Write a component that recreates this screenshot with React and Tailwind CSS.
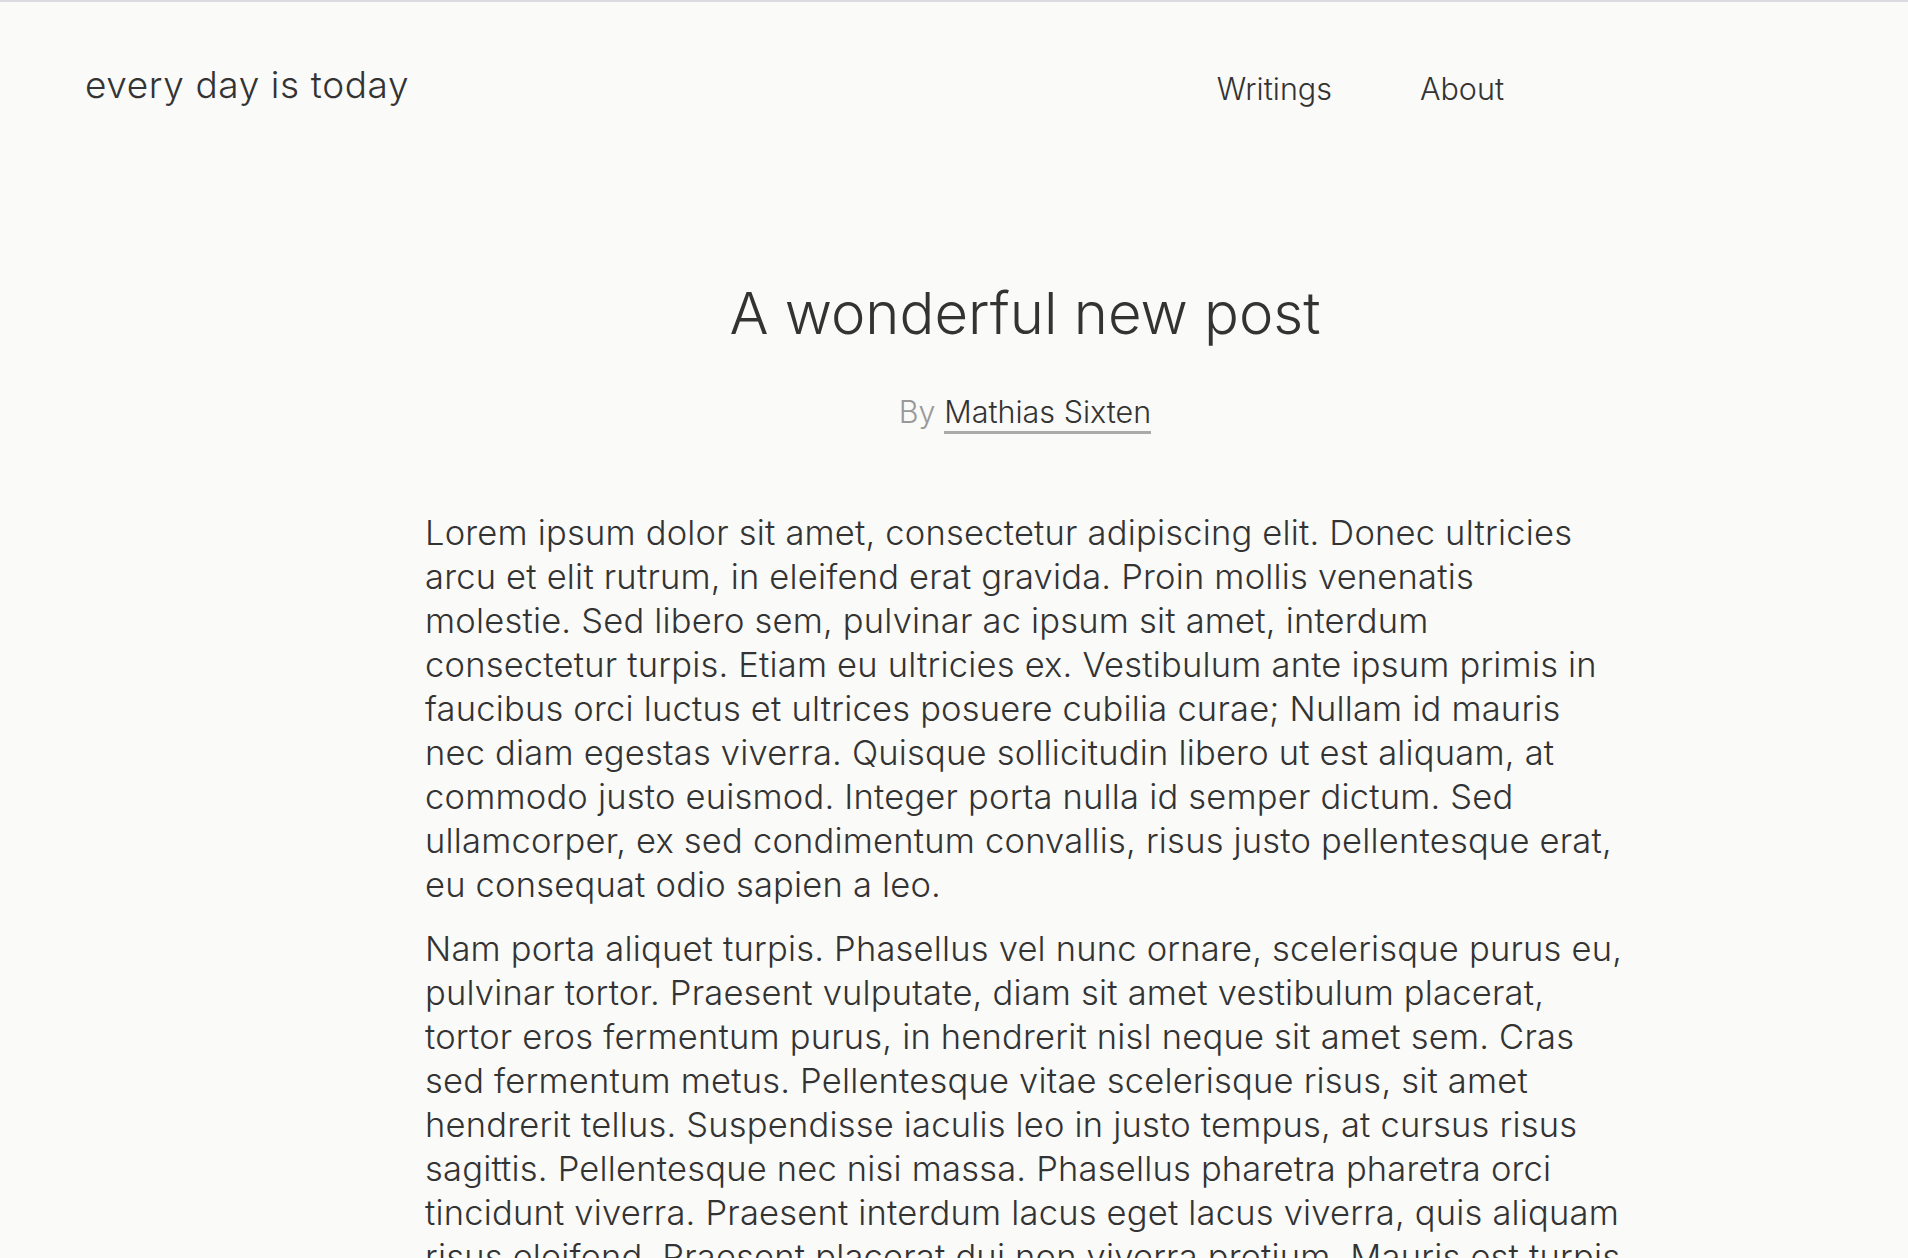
import React from "react";

const p1 = [
  "Lorem ipsum dolor sit amet, consectetur adipiscing elit. Donec ultricies",
  "arcu et elit rutrum, in eleifend erat gravida. Proin mollis venenatis",
  "molestie. Sed libero sem, pulvinar ac ipsum sit amet, interdum",
  "consectetur turpis. Etiam eu ultricies ex. Vestibulum ante ipsum primis in",
  "faucibus orci luctus et ultrices posuere cubilia curae; Nullam id mauris",
  "nec diam egestas viverra. Quisque sollicitudin libero ut est aliquam, at",
  "commodo justo euismod. Integer porta nulla id semper dictum. Sed",
  "ullamcorper, ex sed condimentum convallis, risus justo pellentesque erat,",
  "eu consequat odio sapien a leo.",
];

const p2 = [
  "Nam porta aliquet turpis. Phasellus vel nunc ornare, scelerisque purus eu,",
  "pulvinar tortor. Praesent vulputate, diam sit amet vestibulum placerat,",
  "tortor eros fermentum purus, in hendrerit nisl neque sit amet sem. Cras",
  "sed fermentum metus. Pellentesque vitae scelerisque risus, sit amet",
  "hendrerit tellus. Suspendisse iaculis leo in justo tempus, at cursus risus",
  "sagittis. Pellentesque nec nisi massa. Phasellus pharetra pharetra orci",
  "tincidunt viverra. Praesent interdum lacus eget lacus viverra, quis aliquam",
  "risus eleifend. Praesent placerat dui non viverra pretium. Mauris est turpis,",
  "faucibus a ultrices nec, vestibulum vitae neque. Vivamus non lectus nisi.",
];

function Para({ lines, className }) {
  return (
    <p className={className}>
      {lines.map((l, i) => (
        <React.Fragment key={i}>
          {l}
          {i < lines.length - 1 && <br />}
        </React.Fragment>
      ))}
    </p>
  );
}

export default function App() {
  return (
    <div
      className="min-h-screen bg-[#fafaf8] border-t-2 border-[#d9dbe0] text-[#333333]"
      style={{ fontFamily: "Inter, 'Noto Sans', sans-serif" }}
    >
      <header className="flex items-center justify-between w-[1504px] pl-[85px] h-[166px]">
        <a className="text-[37px] font-light tracking-[0.6px]">every day is today</a>
        <nav className="flex gap-[88px] text-[30.5px] font-light pt-[8px]">
          <a>Writings</a>
          <a>About</a>
        </nav>
      </header>
      <main className="ml-[425px] w-[1200px]">
        <h1 className="mt-[110px] text-center text-[58px] leading-[70px] font-light">
          A wonderful new post
        </h1>
        <div className="mt-[44px] text-center text-[30.5px] font-light leading-[40px]">
          <span className="text-[#999999]">By </span>
          <a className="border-b-[3px] border-[#aaaaaa] pb-[1px]">Mathias Sixten</a>
        </div>
        <div className="mt-[79px] text-[34.5px] font-light leading-[44px] tracking-[0.2px] whitespace-nowrap">
          <Para lines={p1} />
          <Para lines={p2} className="mt-[20px]" />
        </div>
      </main>
    </div>
  );
}
